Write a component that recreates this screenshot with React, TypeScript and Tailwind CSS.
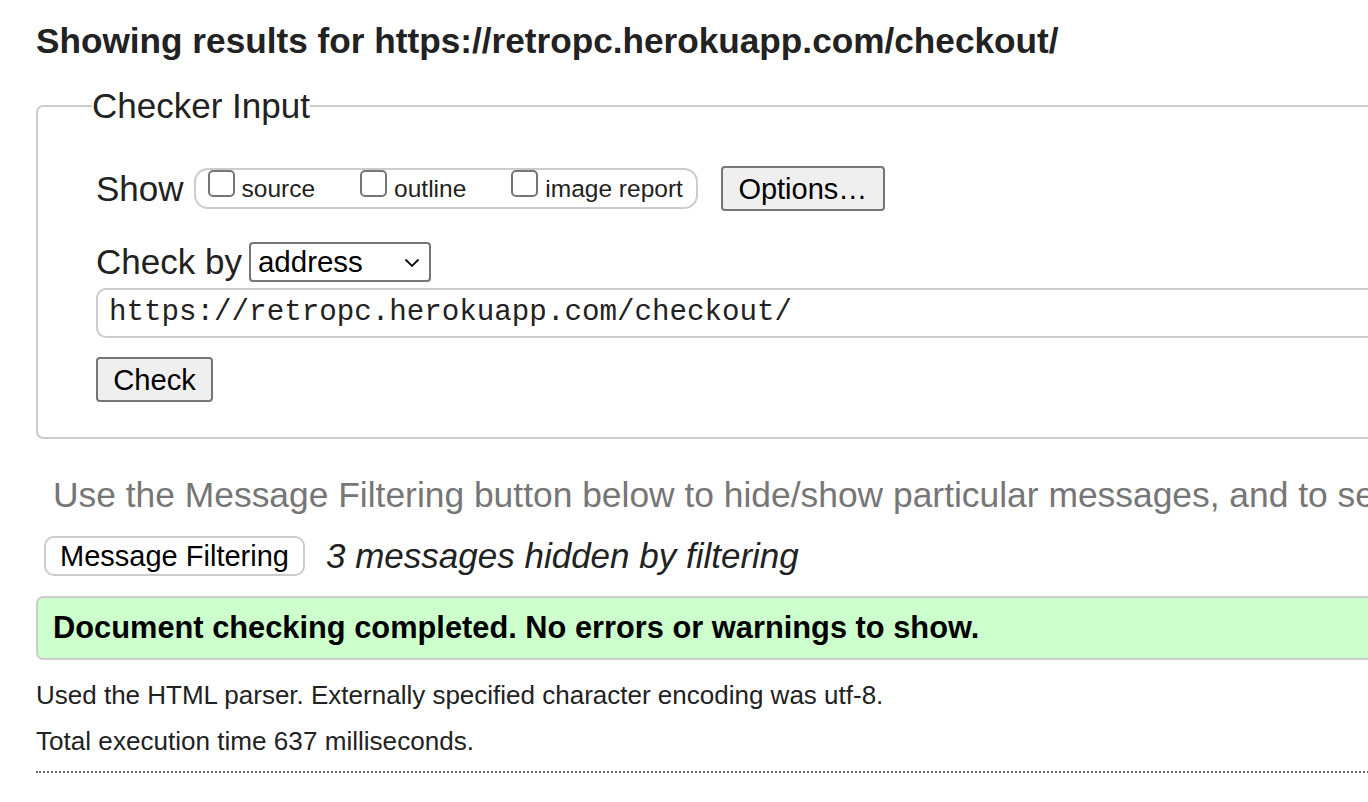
import React from "react";

function Box() {
  return <span className="inline-block w-[27px] h-[27px] border-2 border-[#767676] rounded-[5px] bg-white shrink-0" />;
}

export default function App() {
  return (
    <div className="w-[1368px] h-[802px] overflow-hidden bg-white" style={{ fontFamily: '"Liberation Sans", Arial, sans-serif' }}>
      <div className="w-[1800px] pl-[36px] pt-[21px] text-[#222]">
        <h2 className="text-[35.2px] leading-[40px] font-bold text-[#222]">Showing results for https://retropc.herokuapp.com/checkout/</h2>

        <fieldset className="mt-[25px] border-2 border-[#ccc] rounded-[7px] pl-[58px] pt-[40px] pb-[35px]">
          <legend className="text-[35px] leading-[40px] -ml-[4px] text-[#222]">Checker Input</legend>

          <div className="flex items-center h-[45px]">
            <span className="text-[35px] leading-[40px] mr-[10px]">Show</span>
            <div className="flex items-baseline border-2 border-[#ccc] rounded-[14px] pl-[12px] pr-[13px] pb-[4px] h-[41px]">
              <Box />
              <span className="text-[24.5px] leading-[28px] ml-[7px] mr-[45px]">source</span>
              <Box />
              <span className="text-[24.5px] leading-[28px] ml-[7px] mr-[45px]">outline</span>
              <Box />
              <span className="text-[24.5px] leading-[28px] ml-[7px]">image report</span>
            </div>
            <button className="ml-[23px] h-[45px] w-[164px] bg-[#efefef] border-2 border-[#767676] rounded-[4px] text-[29px] leading-[34px] text-black">Options…</button>
          </div>

          <div className="flex items-center h-[40px] mt-[31px]">
            <span className="text-[35px] leading-[40px] mr-[7px]">Check by</span>
            <div className="w-[182px] h-[40px] border-2 border-[#767676] rounded-[4px] flex items-center justify-between pl-[7px] pr-[9px] bg-white">
              <span className="text-[29.5px] leading-[34px] text-black">address</span>
              <svg width="16" height="10" viewBox="0 0 16 10" className="mt-[2px]">
                <path d="M1.5 1.5 L8 8 L14.5 1.5" fill="none" stroke="#111" strokeWidth="1.8" />
              </svg>
            </div>
          </div>

          <div className="mt-[6px] h-[50px] border-2 border-[#ccc] rounded-[10px] pl-[11px] flex items-center">
            <span className="text-[29.2px] leading-[34px] text-[#222]" style={{ fontFamily: '"Liberation Mono", "Courier New", monospace' }}>https://retropc.herokuapp.com/checkout/</span>
          </div>

          <button className="mt-[19px] block w-[117px] h-[45px] bg-[#efefef] border-2 border-[#767676] rounded-[4px] text-[29.2px] leading-[34px] text-black">Check</button>
        </fieldset>

        <p className="mt-[36px] pl-[17px] text-[35.4px] leading-[40px] text-[#767676] whitespace-nowrap">Use the Message Filtering button below to hide/show particular messages, and to see the rest.</p>

        <div className="mt-[21px] pl-[8px] flex items-center">
          <button className="h-[40px] w-[261px] bg-white border-2 border-[#ccc] rounded-[10px] text-[29px] leading-[34px] text-black">Message Filtering</button>
          <span className="ml-[21px] text-[35px] leading-[40px] italic text-[#222]">3 messages hidden by filtering</span>
        </div>

        <div className="mt-[20px] h-[64px] bg-[#ccffcc] border-2 border-[#ccc] rounded-[7px] pl-[15px] flex items-center">
          <span className="text-[30.8px] leading-[36px] font-bold text-black">Document checking completed. No errors or warnings to show.</span>
        </div>

        <p className="mt-[20px] text-[26px] leading-[30px] text-[#222]">Used the HTML parser. Externally specified character encoding was utf-8.</p>
        <p className="mt-[16px] text-[26.1px] leading-[30px] text-[#222]">Total execution time 637 milliseconds.</p>
        <div className="mt-[15px] border-t-2 border-dotted border-[#666]" />
      </div>
    </div>
  );
}
